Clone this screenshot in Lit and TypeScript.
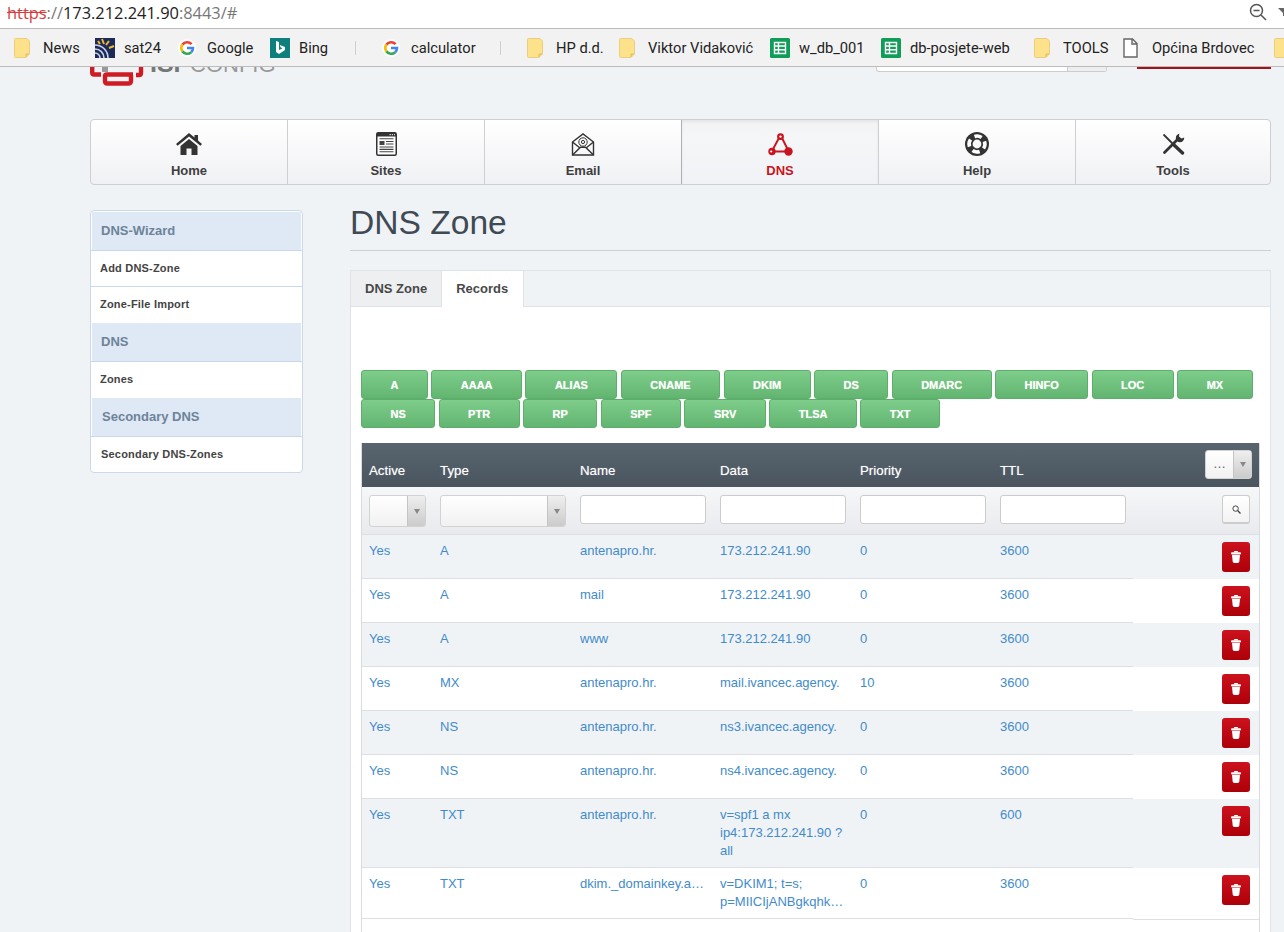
import { LitElement, html, css, svg } from 'lit'
import { customElement } from 'lit/decorators.js'

const bookmarks = [
  { icon: 'folder', label: 'News', w: 81 },
  { icon: 'sat', label: 'sat24', w: 83 },
  { icon: 'google', label: 'Google', w: 92 },
  { icon: 'bing', label: 'Bing', w: 85 },
  { sep: true, w: 27 },
  { icon: 'google', label: 'calculator', w: 118 },
  { sep: true, w: 27 },
  { icon: 'folder', label: 'HP d.d.', w: 92 },
  { icon: 'folder', label: 'Viktor Vidaković', w: 151 },
  { icon: 'sheet', label: 'w_db_001', w: 111 },
  { icon: 'sheet', label: 'db-posjete-web', w: 153 },
  { icon: 'folder', label: 'TOOLS', w: 89 },
  { icon: 'page', label: 'Općina Brdovec', w: 151 },
  { icon: 'folder', label: '', w: 20 }
]

const bookmarkIcons = {
  folder: svg`<svg width="17" height="20" viewBox="0 0 17 20"><path d="M1.5.5H13L15.5 3V15.5L12 19.5H1.5Q.5 19.5 .5 18.5V1.5Q.5 .5 1.5 .5Z" fill="#fde28b" stroke="#e9cf7d"/><path d="M12 19V16H15.5" fill="#f3d579" stroke="#dcbc5e"/></svg>`,
  sat: svg`<svg width="20" height="20" viewBox="0 0 20 20"><rect width="20" height="20" fill="#1c2a58"/><path d="M0 7A13 13 0 0 1 13 20M0 11A9 9 0 0 1 9 20M0 15A5 5 0 0 1 5 20" fill="none" stroke="#c9d2e6" stroke-width="1.6"/><path d="M7 1L9 6M14 3L11 7M19 8L14 10M3 3L5 6" stroke="#f0bb2a" stroke-width="2"/></svg>`,
  google: svg`<svg width="18" height="18" viewBox="0 0 18 18"><circle cx="9" cy="9" r="9" fill="#fff"/><g fill="none" stroke-width="2.6"><path d="M13.6 5.2A6 6 0 0 0 4.4 5.6" stroke="#ea4335"/><path d="M4.4 5.6A6 6 0 0 0 4.4 12.4" stroke="#fbbc05"/><path d="M4.4 12.4A6 6 0 0 0 13.2 13.2" stroke="#34a853"/><path d="M13.2 13.2A6 6 0 0 0 15 9H9" stroke="#4285f4"/></g></svg>`,
  bing: svg`<svg width="20" height="20" viewBox="0 0 20 20"><rect width="20" height="20" fill="#0d7f7c"/><path d="M6 3L9 4V12L12.5 10.2L10.5 9.2L9.8 7L15 9V12L9 16L6 14Z" fill="#fff"/></svg>`,
  sheet: svg`<svg width="20" height="20" viewBox="0 0 20 20"><rect width="20" height="20" rx="1.5" fill="#0f9d58"/><path d="M4.5 4.5H15.5V15.5H4.5ZM4.5 8H15.5M4.5 11.7H15.5M8.5 4.5V15.5" fill="none" stroke="#fff" stroke-width="1.4"/></svg>`,
  page: svg`<svg width="15" height="20" viewBox="0 0 15 20"><path d="M1 1H9.5L14 5.5V19H1ZM9 1V6H14" fill="#fff" stroke="#666" stroke-width="1.4"/></svg>`
}

const navItems = [
  {
    label: 'Home',
    icon: svg`<svg width="26" height="22" viewBox="0 0 26 22" fill="#333"><path d="M13 0L18.5 4.6V2H22V7.5L26 11L24.4 12.8L13 3.5L1.6 12.8L0 11Z"/><path d="M4.5 13L13 6L21.5 13V22H15.5V15.5H10.5V22H4.5Z"/></svg>`
  },
  {
    label: 'Sites',
    icon: svg`<svg width="21" height="24" viewBox="0 0 21 24"><rect x=".75" y=".75" width="19.5" height="22.5" rx="1.5" fill="#fff" stroke="#333" stroke-width="1.5"/><rect x="1" y="1" width="19" height="3.5" fill="#333"/><path d="M13.5 2.7H14.8M15.8 2.7H17M18 2.7H19" stroke="#fff"/><rect x="3.5" y="9" width="5" height="4" fill="#444"/><path d="M3.5 6.8H17.5M10 9.5H17.5M10 12H17.5M3.5 15H17.5M3.5 17.4H17.5M3.5 19.8H17.5" stroke="#444" stroke-width="1.1"/></svg>`
  },
  {
    label: 'Email',
    icon: svg`<svg width="24" height="23" viewBox="0 0 24 23" fill="none" stroke="#333" stroke-width="1.4"><path d="M1.5 9L12 1L22.5 9V22H1.5Z"/><path d="M1.5 9L9 15M22.5 9L15 15M1.5 22L9.5 14.2H14.5L22.5 22"/><circle cx="12" cy="9" r="4.2" stroke-width="1"/><circle cx="12" cy="9" r="1.6" stroke-width="1"/></svg>`
  },
  {
    label: 'DNS',
    active: true,
    icon: svg`<svg width="25" height="23" viewBox="0 0 25 23"><g stroke="#c8141e" stroke-width="1.9"><path d="M11.5 4L4 18M13.5 4L20.5 18M4 18.5H20"/></g><g fill="#c8141e"><circle cx="12.5" cy="3.6" r="3.4"/><circle cx="4" cy="18.5" r="3.7"/><circle cx="20.5" cy="18.5" r="4.2"/></g><circle cx="12.5" cy="3.6" r="1.2" fill="#fff"/><circle cx="3.2" cy="18.5" r="1.1" fill="#fff"/></svg>`
  },
  {
    label: 'Help',
    icon: svg`<svg width="24" height="24" viewBox="0 0 24 24"><circle cx="12" cy="12" r="12" fill="#333"/><circle cx="12" cy="12" r="7.9" fill="none" stroke="#fff" stroke-width="3.6" stroke-dasharray="7.4 5.0" transform="rotate(-20 12 12)"/><circle cx="12" cy="12" r="4.4" fill="#f8f8f9"/></svg>`
  },
  {
    label: 'Tools',
    icon: svg`<svg width="23" height="22" viewBox="0 0 23 22"><path d="M1.5 1.5L12 12" stroke="#333" stroke-width="1.8"/><path d="M12 12L20.5 20" stroke="#333" stroke-width="3.4" stroke-linecap="round"/><path d="M2.5 19.5L15.5 6.5" stroke="#333" stroke-width="2.8" stroke-linecap="round"/><circle cx="18" cy="5" r="4.2" fill="#333"/><path d="M17.4 -1L23 -1L23 4.2L19.4 5.4L17 3.6Z" fill="#fbfbfc"/></svg>`
  }
]

const sideMenu = [
  { title: 'DNS-Wizard', links: ['Add DNS-Zone', 'Zone-File Import'] },
  { title: 'DNS', links: ['Zones'] },
  { title: 'Secondary DNS', links: ['Secondary DNS-Zones'], shifted: true }
]

const recordTypes = [
  ['A', 'AAAA', 'ALIAS', 'CNAME', 'DKIM', 'DS', 'DMARC', 'HINFO', 'LOC', 'MX'],
  ['NS', 'PTR', 'RP', 'SPF', 'SRV', 'TLSA', 'TXT']
].flat()

const records = [
  { type: 'A', name: 'antenapro.hr.', data: ['173.212.241.90'], priority: '0', ttl: '3600' },
  { type: 'A', name: 'mail', data: ['173.212.241.90'], priority: '0', ttl: '3600' },
  { type: 'A', name: 'www', data: ['173.212.241.90'], priority: '0', ttl: '3600' },
  { type: 'MX', name: 'antenapro.hr.', data: ['mail.ivancec.agency.'], priority: '10', ttl: '3600' },
  { type: 'NS', name: 'antenapro.hr.', data: ['ns3.ivancec.agency.'], priority: '0', ttl: '3600' },
  { type: 'NS', name: 'antenapro.hr.', data: ['ns4.ivancec.agency.'], priority: '0', ttl: '3600' },
  { type: 'TXT', name: 'antenapro.hr.', data: ['v=spf1 a mx', 'ip4:173.212.241.90 ?', 'all'], priority: '0', ttl: '600' },
  { type: 'TXT', name: 'dkim._domainkey.a…', data: ['v=DKIM1; t=s;', 'p=MIICIjANBgkqhk…'], priority: '0', ttl: '3600' }
]

const trash = svg`<svg width="10" height="12" viewBox="0 0 10 12" fill="#fff"><rect x="3" y="0" width="4" height="1.5" rx=".6"/><rect x="0" y="1.2" width="10" height="2.2" rx="1"/><path d="M1 4H9L8.3 10.6Q8.1 12 6.8 12H3.2Q1.9 12 1.7 10.6Z"/></svg>`

@customElement('app-root')
export class AppRoot extends LitElement {
  static styles = css`
    :host {
      display: block;
      width: 1284px;
      height: 932px;
      overflow: hidden;
      background: #f0f3f6;
      font-family: 'Liberation Sans', Arial, sans-serif;
    }

    .url-bar {
      display: flex;
      align-items: center;
      height: 24px;
      padding: 0 0 4px 7px;
      background: #fff;
      border-bottom: 1px solid #bcbcbc;
      font: 16.4px 'Open Sans', sans-serif;
      color: #777;
      overflow: hidden;
    }

    .url-bar .insecure {
      color: #d23f3f;
      text-decoration: line-through;
    }

    .url-bar .host {
      color: #222;
    }

    .browser-tools {
      display: flex;
      align-items: center;
      gap: 11px;
      margin-left: auto;
      margin-right: -5px;
    }

    .bookmarks {
      display: flex;
      align-items: center;
      height: 37px;
      padding-left: 14px;
      background: #f2f2f2;
      border-bottom: 1px solid #bcbcbc;
      overflow: hidden;
      font: 14.7px Roboto, sans-serif;
      color: #222;
    }

    .bookmark {
      display: flex;
      flex: none;
      align-items: center;
      white-space: nowrap;
    }

    .bookmark-icon {
      display: flex;
      flex: none;
      width: 20px;
      margin-right: 9px;
    }

    .bookmark-sep {
      flex: none;
      height: 14px;
      border-left: 1px solid #cfcfcf;
    }

    .page {
      padding-right: 13px;
      padding-left: 90px;
    }

    .top {
      display: flex;
      height: 52px;
      overflow: hidden;
    }

    .logo {
      display: block;
      flex: none;
    }

    .search {
      display: flex;
      width: 231px;
      height: 5px;
      margin-left: 596px;
      box-sizing: border-box;
      background: #fff;
      border: 1px solid #ccc;
      border-top: 0;
      border-radius: 0 0 3px 3px;
    }

    .search span {
      width: 38px;
      margin-left: auto;
      background: #eee;
      border-left: 1px solid #ccc;
    }

    .logout {
      width: 134px;
      height: 2px;
      margin-left: 30px;
      background: #a3121c;
    }

    nav {
      display: grid;
      grid-template-columns: repeat(5, 197px) 1fr;
      height: 66px;
      box-sizing: border-box;
      border: 1px solid #cdcfd2;
      border-radius: 4px;
      overflow: hidden;
      background: linear-gradient(#fff, #f0f1f4);
    }

    .nav-item {
      display: flex;
      flex-direction: column;
      align-items: center;
      padding-top: 12px;
      border-right: 1px solid #cdcfd2;
      color: #3e3e3e;
      font-size: 13px;
      font-weight: 700;
    }

    .nav-item:last-child {
      border-right: 0;
    }

    .nav-item.active {
      margin-top: -1px;
      margin-bottom: -1px;
      margin-left: -1px;
      border: 1px solid #adb0b3;
      border-right-color: #cdcfd2;
      background: linear-gradient(#f3f3f4, #f5f6f8 30%, #f1f2f5);
      box-shadow: inset 0 2px 3px rgba(0, 0, 0, 0.06);
      color: #c8141e;
    }

    .nav-icon {
      display: flex;
      align-items: center;
      justify-content: center;
      height: 24px;
    }

    .nav-label {
      margin-top: 7px;
      line-height: 16px;
    }

    .layout {
      display: flex;
      gap: 47px;
      align-items: flex-start;
    }

    aside {
      flex: none;
      width: 213px;
      margin-top: 25px;
      box-sizing: border-box;
      background: #fff;
      border: 1px solid #c9d9eb;
      border-radius: 4px;
      overflow: hidden;
    }

    .side-title {
      height: 38px;
      margin: 1px 1px 0;
      padding-left: 9px;
      line-height: 37px;
      background: #dfe8f5;
      color: #6c8499;
      font-size: 13px;
      font-weight: 700;
    }

    .side-title.shifted {
      padding-left: 10px;
    }

    .side-link {
      height: 35px;
      padding-left: 9px;
      line-height: 35px;
      border-top: 1px solid #c9d9eb;
      color: #444;
      font-size: 11px;
      font-weight: 700;
      letter-spacing: 0.2px;
    }

    .side-link.shifted {
      padding-left: 10px;
    }

    main {
      flex: 1;
      min-width: 0;
      padding-top: 17px;
    }

    h1 {
      height: 48px;
      margin: 0 0 19px;
      line-height: 41px;
      border-bottom: 1px solid #ccd0d4;
      color: #3f4a54;
      font-size: 33.6px;
      font-weight: 400;
    }

    .panel {
      background: #fff;
      border: 1px solid #dfe2e6;
    }

    .tabs {
      display: flex;
      height: 35px;
      background: #f0f3f6;
      border-bottom: 1px solid #dfe2e6;
      color: #484848;
      font-size: 13px;
      font-weight: 700;
    }

    .tab {
      display: flex;
      align-items: center;
      height: 35px;
      padding: 0 14px;
      background: #eeeff1;
    }

    .tab.current {
      height: 35px;
      padding: 0 14.5px 1px 14px;
      background: #fff;
      border-left: 1px solid #dfe2e6;
      border-right: 1px solid #dfe2e6;
    }

    .panel-body {
      padding: 63px 10px 40px;
    }

    .type-buttons {
      display: flex;
      flex-wrap: wrap;
      column-gap: 3.5px;
      margin-bottom: 15px;
    }

    .type-button {
      height: 29px;
      box-sizing: border-box;
      padding: 0 28.45px;
      line-height: 28px;
      background: linear-gradient(#7ecd8a, #62b571);
      border: 1px solid #5cae6a;
      border-radius: 3px;
      color: #fff;
      font-size: 11px;
      font-weight: 700;
      text-shadow: 0 0 1px rgba(255, 255, 255, 0.6);
    }

    .table {
      padding-bottom: 60px;
      border-right: 1px solid #d8dbe0;
      border-left: 1px solid #d8dbe0;
    }

    .grid-row {
      display: grid;
      grid-template-columns: 71px repeat(5, 140px) 1fr;
    }

    .head {
      height: 44px;
      background: linear-gradient(#58656f, #4a555e);
      color: #fff;
      font-size: 13.3px;
    }

    .head .cell {
      align-self: end;
      padding: 0 7px 7px;
      line-height: 18px;
      text-shadow: 0 0 1px rgba(255, 255, 255, 0.5);
    }

    .head .tools {
      display: flex;
      justify-content: flex-end;
      align-self: start;
      padding: 7px 7px 0 0;
    }

    .select {
      display: flex;
      height: 32px;
      box-sizing: border-box;
      overflow: hidden;
      background: linear-gradient(#fff, #f1f1f1);
      border: 1px solid #d2d2d2;
      border-radius: 3px;
      color: #666;
    }

    .select-value {
      flex: 1;
      line-height: 26px;
      font-size: 13px;
      text-align: center;
    }

    .select-arrow {
      display: flex;
      flex: none;
      align-items: center;
      justify-content: center;
      width: 17px;
      background: linear-gradient(#efefef, #cbcbcb);
      border-left: 1px solid #c4c4c4;
    }

    .select-arrow::after {
      content: '';
      border-top: 5px solid #888;
      border-right: 3.5px solid transparent;
      border-left: 3.5px solid transparent;
    }

    .select.small {
      width: 47px;
      height: 29px;
    }

    .filters {
      background: linear-gradient(#f6f7f9, #e8eaed);
      border-bottom: 1px solid #dcdfe3;
    }

    .filters .cell {
      height: 32px;
      padding: 8px 7px 7px;
    }

    .filters input {
      display: block;
      width: 100%;
      height: 29px;
      box-sizing: border-box;
      background: #fff;
      border: 1px solid #ccc;
      border-radius: 3px;
      outline: none;
    }

    .filters .actions {
      display: flex;
      justify-content: flex-end;
      padding-right: 9px;
    }

    .search-button {
      display: flex;
      align-items: center;
      justify-content: center;
      width: 28px;
      height: 29px;
      box-sizing: border-box;
      background: linear-gradient(#fff, #f3f3f3);
      border: 1px solid #ccc;
      border-bottom-width: 2px;
      border-radius: 3px;
    }

    .record {
      background: #fff;
      color: #428bca;
      font-size: 13px;
      line-height: 18px;
    }

    .record:nth-child(odd) {
      background: #f0f3f6;
    }

    .record .cell {
      padding: 7px;
      border-bottom: 1px solid #dcdfe3;
      overflow: hidden;
      white-space: nowrap;
    }

    .record .delete-cell {
      position: relative;
      display: flex;
      justify-content: flex-end;
      margin-bottom: -1px;
      padding: 7px 9px 7px 0;
      background: inherit;
    }

    .line {
      display: block;
    }

    .delete {
      display: flex;
      align-items: center;
      justify-content: center;
      width: 28px;
      height: 30px;
      background: linear-gradient(#cc121d, #ad0009);
      border-radius: 3px;
    }
  `

  renderBookmark(item) {
    if (item.sep) {
      return html`<span class="bookmark" style="width:${item.w}px"><span class="bookmark-sep"></span></span>`
    }
    return html`
      <span class="bookmark" style="width:${item.w}px">
        <span class="bookmark-icon">${bookmarkIcons[item.icon]}</span>${item.label}
      </span>
    `
  }

  render() {
    return html`
      <div class="url-bar">
        <span class="insecure">https</span>://<span class="host">173.212.241.90</span>:8443/#
        <span class="browser-tools">
          <svg width="18" height="18" viewBox="0 0 18 18" fill="none" stroke="#555" stroke-width="1.5"><circle cx="7.5" cy="7.5" r="6"/><path d="M4.5 7.5H10.5M12 12L17 17"/></svg>
          <svg width="11" height="8" viewBox="0 0 11 8"><path d="M0 0H11L6 5V8H5V5Z" fill="#666"/></svg>
        </span>
      </div>
      <div class="bookmarks">${bookmarks.map(b => this.renderBookmark(b))}</div>

      <div class="page">
        <div class="top">
          <svg class="logo" width="190" height="20" viewBox="0 0 190 20">
            <g fill="none" stroke="#cf1b24" stroke-width="4.4">
              <path d="M2.2 0V5.5Q2.2 7.5 4.2 7.5H11"/>
              <path d="M43 7.5H17Q15 7.5 15 9.5V14Q15 16.5 17.5 16.5H38Q41 16.5 41 14V8"/>
              <path d="M51 0V6Q51 8 49 8H46"/>
            </g>
            <rect x="12" y="0" width="6" height="5" fill="#999"/>
            <text x="60" y="5" font-size="25" font-weight="700" fill="#777" font-family="Liberation Sans">ISP</text>
            <text x="100" y="5" font-size="22" fill="#999" font-family="Liberation Sans">CONFIG</text>
          </svg>
          <div class="search"><span></span></div>
          <div class="logout"></div>
        </div>

        <nav>
          ${navItems.map(
            item => html`
              <div class="nav-item ${item.active ? 'active' : ''}">
                <span class="nav-icon">${item.icon}</span>
                <span class="nav-label">${item.label}</span>
              </div>
            `
          )}
        </nav>

        <div class="layout">
          <aside>
            ${sideMenu.map(
              group => html`
                <div class="side-title ${group.shifted ? 'shifted' : ''}">${group.title}</div>
                ${group.links.map(l => html`<div class="side-link ${group.shifted ? 'shifted' : ''}">${l}</div>`)}
              `
            )}
          </aside>

          <main>
            <h1>DNS Zone</h1>
            <div class="panel">
              <div class="tabs">
                <span class="tab">DNS Zone</span>
                <span class="tab current">Records</span>
              </div>
              <div class="panel-body">
                <div class="type-buttons">
                  ${recordTypes.map(t => html`<span class="type-button">${t}</span>`)}
                </div>
                <div class="table">
                  <div class="grid-row head">
                    ${['Active', 'Type', 'Name', 'Data', 'Priority', 'TTL'].map(h => html`<span class="cell">${h}</span>`)}
                    <span class="tools">
                      <span class="select small">
                        <span class="select-value">…</span><span class="select-arrow"></span>
                      </span>
                    </span>
                  </div>
                  <div class="grid-row filters">
                    <span class="cell"><span class="select"><span class="select-value"></span><span class="select-arrow"></span></span></span>
                    <span class="cell"><span class="select"><span class="select-value"></span><span class="select-arrow"></span></span></span>
                    <span class="cell"><input /></span>
                    <span class="cell"><input /></span>
                    <span class="cell"><input /></span>
                    <span class="cell"><input /></span>
                    <span class="cell actions">
                      <span class="search-button">
                        <svg width="9" height="9" viewBox="0 0 10 10" fill="none" stroke="#444" stroke-width="1.1"><circle cx="4" cy="4" r="3"/><path d="M6.2 6.2L9.4 9.4" stroke-width="1.5"/></svg>
                      </span>
                    </span>
                  </div>
                  <div>
                    ${records.map(
                      r => html`
                        <div class="grid-row record">
                          <span class="cell">Yes</span>
                          <span class="cell">${r.type}</span>
                          <span class="cell">${r.name}</span>
                          <span class="cell">${r.data.map(d => html`<span class="line">${d}</span>`)}</span>
                          <span class="cell">${r.priority}</span>
                          <span class="cell">${r.ttl}</span>
                          <span class="cell delete-cell"><span class="delete">${trash}</span></span>
                        </div>
                      `
                    )}
                  </div>
                </div>
              </div>
            </div>
          </main>
        </div>
      </div>
    `
  }
}
